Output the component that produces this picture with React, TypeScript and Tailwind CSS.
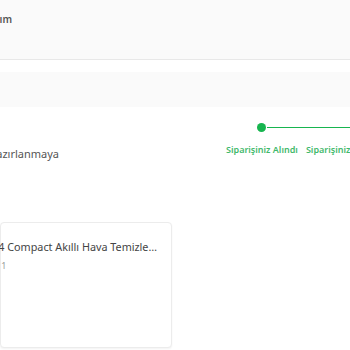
const font = { fontFamily: '"Noto Sans", "Open Sans", Arial, sans-serif' };

const steps = [
  { label: "Siparişiniz Alındı", active: true },
  { label: "Siparişiniz Hazırlanıyor", active: false },
];

export default function App() {
  return (
    <div className="w-[350px] h-[350px] overflow-hidden bg-white" style={font}>
      <div className="h-[60px] bg-[#fafafa] border-b border-[#e8e8e8] flex items-start pt-[12px]">
        <div className="w-[12px] flex justify-end whitespace-nowrap text-[10px] font-semibold text-[#555]">
          Hesabım
        </div>
      </div>
      <div className="mt-[12px] h-[35px] bg-[#fafafa]" />

      <div className="flex items-start mt-[16px]">
        <div className="w-[59px] shrink-0 flex justify-end whitespace-nowrap text-[11px] text-[#555] mt-[23px]">
          Siparişiniz hazırlanmaya
        </div>
        <div className="ml-[163px] shrink-0 flex items-start">
          {steps.map((s) => (
            <div key={s.label} className="flex flex-col items-center px-[4px] whitespace-nowrap">
              <div className="relative h-[8px] w-full flex justify-center">
                {s.active && <div className="w-[9px] h-[9px] rounded-full bg-[#17b54f] -mt-[0.5px]" />}
                {s.active && <div className="absolute left-[calc(50%+5px)] right-[-60px] top-[3.5px] h-[1.5px] bg-[#17b54f]" />}
              </div>
              <span className="mt-[12px] text-[9px] font-semibold text-[#3fb96b]">{s.label}</span>
            </div>
          ))}
        </div>
      </div>

      <div className="mt-[59px] w-[172px] h-[126px] bg-white border border-[#ececec] rounded-[4px] shadow-[0_1px_2px_rgba(0,0,0,0.05)] flex flex-col items-end pt-[16px] pr-[14px]">
        <div className="w-[157px] flex justify-end whitespace-nowrap text-[10.8px] text-[#444]">
          Dyson TP04 Compact Akıllı Hava Temizle…
        </div>
        <div className="w-[157px] flex justify-start text-[9px] text-[#999] mt-[4px] whitespace-nowrap">
          <span className="-ml-[23px] shrink-0">Adet: 1</span>
        </div>
      </div>
    </div>
  );
}
